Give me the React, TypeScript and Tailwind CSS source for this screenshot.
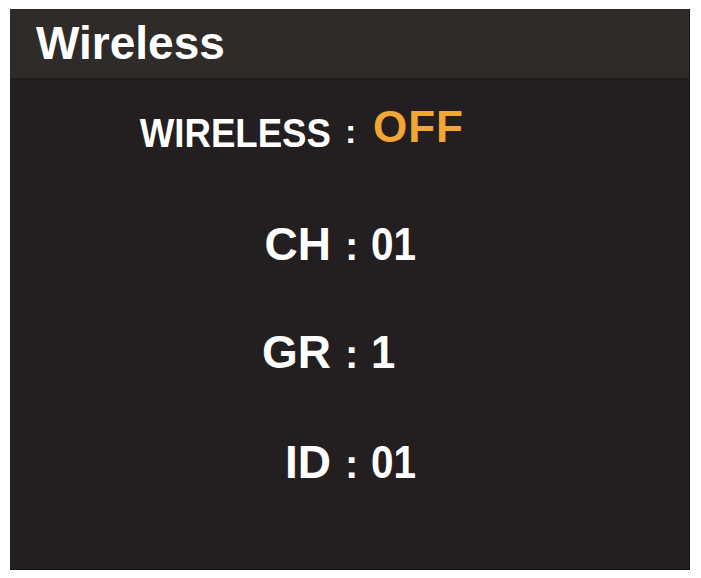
import React from "react";

const font = { fontFamily: '"Liberation Sans", Arial, sans-serif' };

function Row({
  h,
  label,
  value,
  labelClass,
  colonClass,
  valueClass,
  align,
}: {
  h: string;
  label: string;
  value: string;
  labelClass: string;
  colonClass: string;
  valueClass: string;
  align: string;
}) {
  return (
    <div className={`flex items-end ${h}`}>
      <div className={`flex ${align}`}>
        <div className="w-[321px] flex justify-end">
          <span className={`leading-none font-bold text-white whitespace-nowrap origin-right ${labelClass}`}>{label}</span>
        </div>
        <span className={`ml-[14px] w-[13px] leading-none font-bold text-white ${colonClass}`}>:</span>
        <span className={`ml-[13px] leading-none font-bold origin-left ${valueClass}`}>{value}</span>
      </div>
    </div>
  );
}

export default function App() {
  return (
    <div className="w-[701px] h-[578px] bg-white pt-[9px] pl-[10px]" style={font}>
      <div className="w-[680px] h-[561px] bg-[#231f20] border-r border-b border-[#181516] flex flex-col">
        <div className="h-[69px] bg-[#2e2b28] pt-[11px] pl-[26px]">
          <span className="text-[46px] leading-none font-bold text-white">Wireless</span>
        </div>
        <Row
          h="h-[75px]"
          align="items-end"
          label="WIRELESS"
          value="OFF"
          labelClass="text-[40px] scale-x-[0.915]"
          colonClass="text-[34px] pb-[5px]"
          valueClass="text-[44px] text-[#f2a633] pb-[4px] tracking-[1px] ml-[15px]"
        />
        <Row
          h="h-[114px]"
          align="items-baseline"
          label="CH"
          value="01"
          labelClass="text-[46px]"
          colonClass="text-[40px]"
          valueClass="text-[46px] text-white scale-x-[0.88]"
        />
        <Row
          h="h-[108px]"
          align="items-baseline"
          label="GR"
          value="1"
          labelClass="text-[46px]"
          colonClass="text-[40px]"
          valueClass="text-[46px] text-white scale-x-[0.95]"
        />
        <Row
          h="h-[110px]"
          align="items-baseline"
          label="ID"
          value="01"
          labelClass="text-[46px]"
          colonClass="text-[40px]"
          valueClass="text-[46px] text-white scale-x-[0.88]"
        />
      </div>
    </div>
  );
}
